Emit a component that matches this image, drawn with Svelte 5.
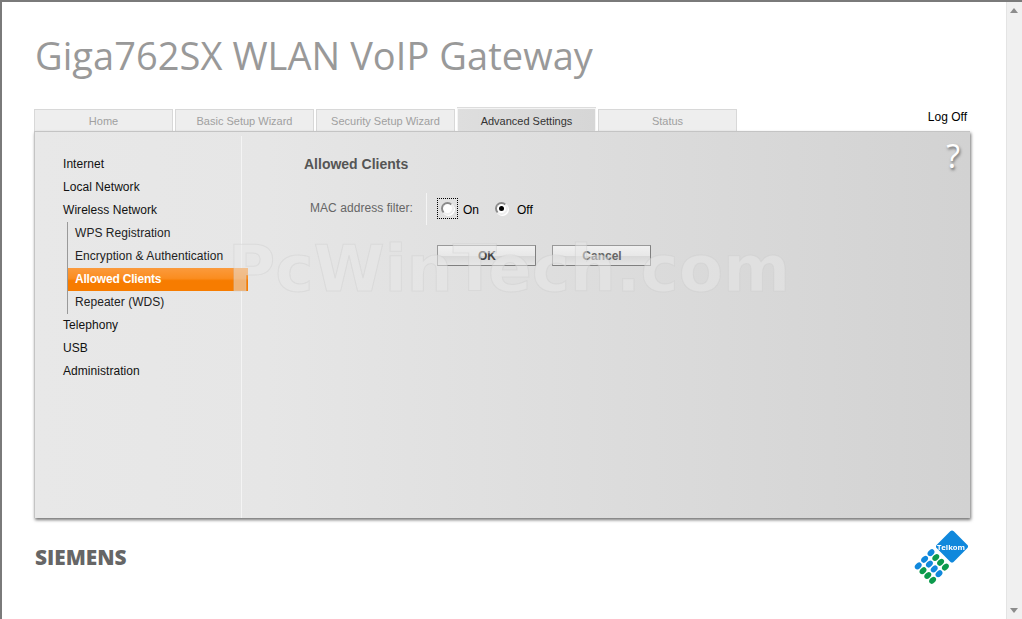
<script>
  const tabs = [
    { label: "Home" },
    { label: "Basic Setup Wizard" },
    { label: "Security Setup Wizard" },
    { label: "Advanced Settings", active: true },
    { label: "Status" }
  ];
  const topNav = ["Internet", "Local Network", "Wireless Network"];
  const subNav = ["WPS Registration", "Encryption & Authentication", "Allowed Clients", "Repeater (WDS)"];
  const bottomNav = ["Telephony", "USB", "Administration"];

  // telkom keypad: 4 rows of 3, each step runs diagonally
  const blue = "#1088dc";
  const green = "#0c9a4c";
  const keys = [
    [blue, blue, blue],
    [green, blue, green],
    [green, blue, green],
    [green, blue, green]
  ];
  const dots = keys.flatMap((row, u) =>
    row.map((color, v) => ({
      x: 17 + u * 4.8 - v * 6.4,
      y: 22.7 + u * 4.8 + v * 6.6,
      color
    }))
  );

  let filter = "off";
</script>

<div class="window">
  <div class="page">
    <h1>Giga762SX WLAN VoIP Gateway</h1>

    <div class="tabbar">
      {#each tabs as tab}
        <div class="tab" class:active={tab.active}>{tab.label}</div>
      {/each}
      <div class="logoff">Log Off</div>
    </div>

    <div class="panel">
      <div class="watermark">PcWinTech.com</div>
      <nav class="sidebar">
        {#each topNav as item}
          <div class="item">{item}</div>
        {/each}
        <div class="sublist">
          {#each subNav as item}
            <div class="item sub" class:selected={item === "Allowed Clients"}>{item}</div>
          {/each}
        </div>
        {#each bottomNav as item}
          <div class="item">{item}</div>
        {/each}
      </nav>
      <div class="content">
        <div class="help">?</div>
        <h2>Allowed Clients</h2>
        <div class="row">
          <div class="label">MAC address filter:</div>
          <div class="options">
            <div class="focus">
              <span class="radio" class:checked={filter === "on"}></span>
            </div>
            <span class="opt on">On</span>
            <span class="radio second" class:checked={filter === "off"}></span>
            <span class="opt off">Off</span>
          </div>
        </div>
        <div class="buttons">
          <div class="btn ok">OK</div>
          <div class="btn cancel">Cancel</div>
        </div>
      </div>
    </div>

    <div class="footer">
      <div class="siemens">SIEMENS</div>
      <svg class="telkom" width="54" height="56" viewBox="0 0 54 56">
        <rect x="26" y="4.5" width="24" height="24" rx="2.5" fill={blue} transform="rotate(45 38 16.5)" />
        {#each dots as d}
          <ellipse cx={d.x} cy={d.y} rx="3.9" ry="2.8" fill={d.color} transform="rotate(-45 {d.x} {d.y})" />
        {/each}
        <text x="37" y="20" text-anchor="middle" class="telkom-text">Telkom</text>
      </svg>
    </div>
  </div>

  <div class="scrollbar">
    <span class="arrow up"></span>
    <span class="arrow down"></span>
  </div>
</div>

<style>
  :global(body) {
    margin: 0;
    background: #fff;
    overflow: hidden;
  }

  .window {
    display: flex;
    height: 619px;
    box-sizing: border-box;
    border-top: 2px solid #7a7a7a;
    border-left: 2px solid #7a7a7a;
    font-family: "Liberation Sans", Arial, sans-serif;
    font-size: 12px;
  }

  .page {
    flex: 1;
    padding: 0 36px 0 32px;
    min-width: 0;
  }

  h1 {
    margin: 0;
    padding: 30px 0 0 1px;
    height: 107px;
    box-sizing: border-box;
    font-family: "Open Sans", sans-serif;
    font-weight: 400;
    font-size: 38px;
    letter-spacing: 0.06px;
    line-height: 46px;
    color: #999;
    white-space: nowrap;
  }

  .tabbar {
    display: flex;
    gap: 2px;
    height: 22px;
    align-items: flex-end;
    position: relative;
  }

  .tab {
    width: 139px;
    height: 22px;
    box-sizing: border-box;
    border: 1px solid #d8d8d8;
    border-bottom: 0;
    background: #eeeeee;
    color: #a0a0a0;
    text-align: center;
    font-size: 11px;
    line-height: 23px;
  }

  .tab.active {
    height: 23px;
    margin-top: -1px;
    background: linear-gradient(to right, #dedede, #d6d6d6);
    border-color: #f4f4f4;
    box-shadow: 0 -1px 0 #dcdcdc;
    color: #333;
    line-height: 25px;
    position: relative;
    z-index: 1;
  }

  .logoff {
    margin-left: auto;
    margin-right: 3px;
    padding-top: 1px;
    align-self: flex-start;
    color: #000;
    line-height: 14px;
  }

  .panel {
    position: relative;
    display: flex;
    width: 936px;
    height: 387px;
    box-sizing: border-box;
    border-top: 1px solid #c4c4c4;
    border-left: 1px solid #c4c4c4;
    background: linear-gradient(to right, #e8e8e8 0%, #e6e6e6 25%, #d2d2d2 100%);
    box-shadow: 1px 2px 3px rgba(0, 0, 0, 0.55);
  }

  .watermark {
    position: absolute;
    left: 193px;
    top: 102px;
    font-family: "DejaVu Sans", sans-serif;
    font-size: 64.5px;
    font-weight: 700;
    line-height: 70px;
    color: rgba(232, 232, 232, 0.5);
    -webkit-text-stroke: 1px rgba(200, 200, 200, 0.35);
    white-space: nowrap;
    z-index: 2;
    pointer-events: none;
  }

  .sidebar {
    width: 207px;
    flex: none;
    box-sizing: border-box;
    padding: 17px 0 0 28px;
    margin-top: 4px;
    border-right: 1px solid #f4f4f4;
  }

  .item {
    height: 23px;
    line-height: 23px;
    color: #111;
    letter-spacing: 0.05px;
    white-space: nowrap;
  }

  .sublist {
    margin-left: 4px;
    border-left: 1px solid #999;
  }

  .sub {
    padding-left: 7px;
    color: #222;
  }

  .sub.selected {
    width: 180px;
    box-sizing: border-box;
    background: linear-gradient(to bottom, #fb9a3c 0%, #fb8d20 45%, #f77c00 55%, #f77c00 100%);
    color: #fff;
    font-weight: 700;
    letter-spacing: -0.2px;
    position: relative;
  }

  .content {
    flex: 1;
    position: relative;
    padding: 23px 0 0 62px;
  }

  .help {
    position: absolute;
    right: 10px;
    top: 6px;
    font-size: 32px;
    line-height: 36px;
    font-family: "Open Sans", sans-serif;
    color: #fff;
    text-shadow: 1px 2px 3px rgba(0, 0, 0, 0.5);
  }

  h2 {
    margin: 0;
    font-size: 14px;
    line-height: 18px;
    font-weight: 700;
    color: #555;
  }

  .row {
    display: flex;
    margin-top: 20px;
    height: 32px;
  }

  .label {
    width: 109px;
    text-align: right;
    color: #666;
    letter-spacing: 0.05px;
    line-height: 31px;
    padding-right: 13px;
    border-right: 1px solid #f4f4f4;
  }

  .options {
    display: flex;
    align-items: center;
    padding-left: 10px;
    height: 30px;
    color: #000;
  }

  .focus {
    display: flex;
    align-items: center;
    justify-content: center;
    width: 19px;
    height: 19px;
    border: 1px dotted #000;
  }

  .radio {
    display: block;
    width: 9px;
    height: 9px;
    border-radius: 50%;
    border: 2px solid #8a8a8a;
    border-right-color: #eee;
    border-bottom-color: #eee;
    background: #fff;
    position: relative;
    box-shadow: 1px 1px 0 #fff;
  }

  .radio.checked::after {
    content: "";
    position: absolute;
    left: 2px;
    top: 2px;
    width: 5px;
    height: 5px;
    border-radius: 50%;
    background: #000;
  }

  .radio.second {
    margin-left: 16px;
  }

  .opt {
    padding-top: 3px;
  }

  .opt.on {
    margin-left: 5px;
  }

  .opt.off {
    margin-left: 9px;
  }

  .buttons {
    display: flex;
    gap: 16px;
    margin: 20px 0 0 133px;
  }

  .btn {
    width: 99px;
    height: 21px;
    box-sizing: border-box;
    border: 1px solid #999;
    border-right-color: #808080;
    border-bottom-color: #808080;
    background: linear-gradient(to bottom, #f0f0f0 0%, #e8e8e8 50%, #d8d8d8 55%, #e4e4e4 100%);
    text-align: center;
    font-weight: 700;
    line-height: 20px;
    padding-left: 1px;
  }

  .btn.ok {
    color: #444;
  }

  .btn.cancel {
    color: #666;
  }

  .footer {
    display: flex;
    justify-content: space-between;
    width: 936px;
    padding-top: 12px;
  }

  .siemens {
    font-family: "Open Sans", sans-serif;
    font-weight: 800;
    font-size: 20.8px;
    line-height: 32px;
    color: #666;
    padding: 11px 0 0 1px;
  }

  .telkom {
    margin-right: 2px;
    filter: blur(0.4px);
  }

  .telkom-text {
    font-family: "Open Sans", sans-serif;
    font-size: 7.6px;
    font-weight: 700;
    fill: #fff;
  }

  .scrollbar {
    width: 16px;
    flex: none;
    position: relative;
    background: #f0f0f0;
    border-left: 1px solid #e4e4e4;
    box-sizing: border-box;
  }

  .arrow {
    position: absolute;
    left: 3px;
    width: 0;
    height: 0;
    border-left: 4px solid transparent;
    border-right: 4px solid transparent;
  }

  .arrow.up {
    top: 6px;
    border-bottom: 5px solid #8c8c8c;
  }

  .arrow.down {
    bottom: 6px;
    border-top: 5px solid #8c8c8c;
  }
</style>
